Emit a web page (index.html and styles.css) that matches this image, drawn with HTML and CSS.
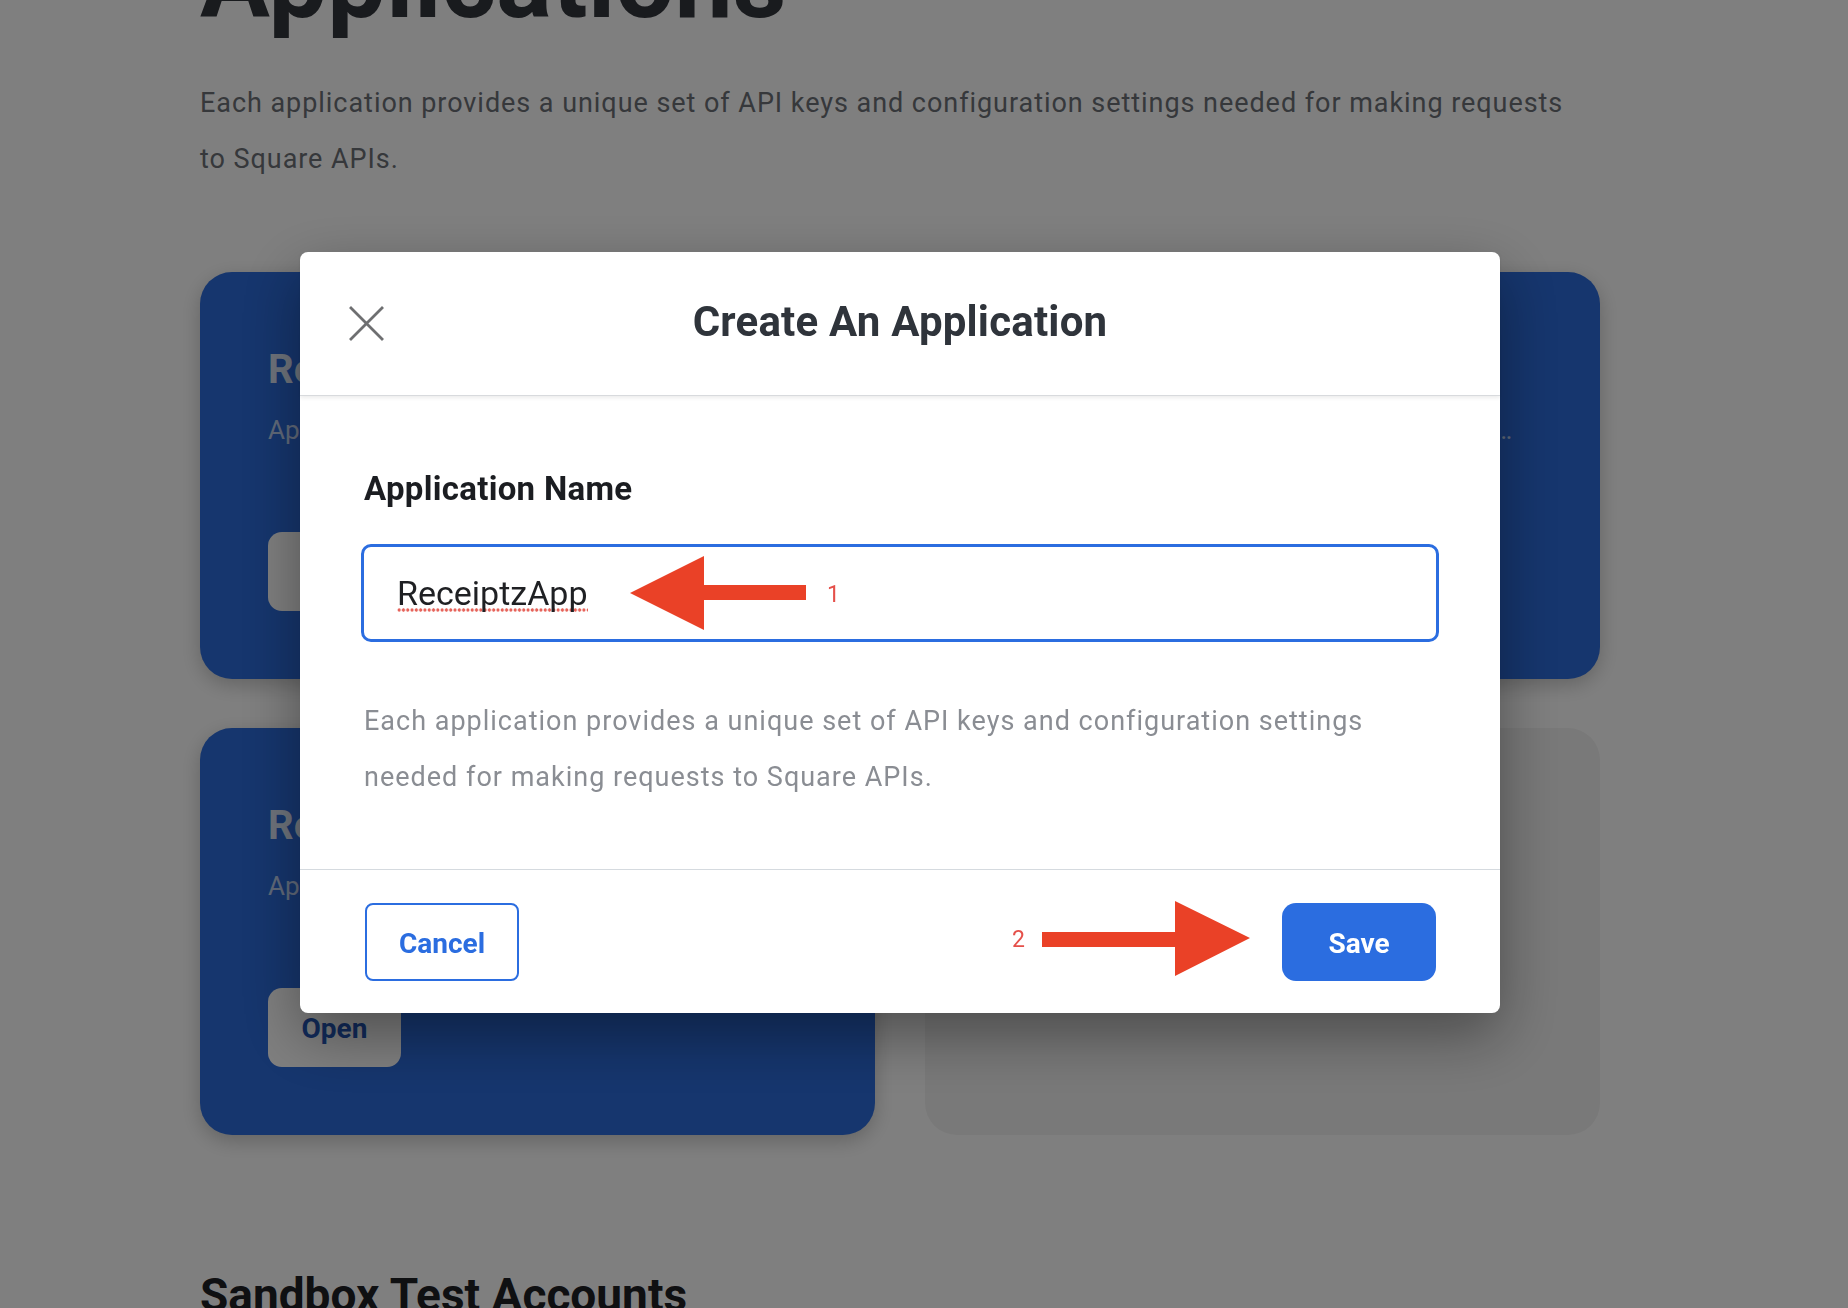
FILE: index.html
```html
<!DOCTYPE html>
<html lang="en">
<head>
<meta charset="utf-8">
<title>Applications</title>
<link rel="stylesheet" href="styles.css">
</head>
<body>
<main class="page">
  <h1 class="page-title">Applications</h1>
  <p class="page-intro">Each application provides a unique set of API keys and configuration settings needed for making requests to Square APIs.</p>

  <section class="app-grid">
    <article class="app-card app-card--wide">
      <h2 class="app-name">ReceiptzApp</h2>
      <p class="app-meta">Application ID: sandbox-sq0idb-4Rf09dPZfXr7yKdT1mM3kA · Created for testing receipts and transactions across sandbox locations with webhooks and OAuth permissions enabled for development</p>
      <button class="app-open" type="button">Open</button>
    </article>
    <article class="app-card">
      <h2 class="app-name">Receipts Demo</h2>
      <p class="app-meta">Application ID: sandbox-sq0idb-8HkLq2</p>
      <button class="app-open" type="button">Open</button>
    </article>
    <article class="app-card app-card--empty"></article>
  </section>

  <h2 class="section-title">Sandbox Test Accounts</h2>
</main>

<div class="overlay">
  <div class="modal" role="dialog" aria-label="Create An Application">
    <header class="modal-header">
      <button class="modal-close" type="button" aria-label="Close">
        <svg width="35" height="35" viewBox="0 0 35 35"><path d="M2 2 L33 33 M33 2 L2 33" stroke="#6e6f71" stroke-width="2.8" stroke-linecap="square" fill="none"/></svg>
      </button>
      <h3 class="modal-title">Create An Application</h3>
      <span class="modal-spacer"></span>
    </header>
    <div class="modal-body">
      <label class="field-label" for="appname">Application Name</label>
      <div class="field-input" id="appname"><span class="spell">ReceiptzApp</span></div>
      <p class="modal-desc">Each application provides a unique set of API keys and configuration settings needed for making requests to Square APIs.</p>
    </div>
    <footer class="modal-footer">
      <button class="btn btn-cancel" type="button">Cancel</button>
      <button class="btn btn-save" type="button">Save</button>
    </footer>
  </div>

  <svg class="annotations" width="1848" height="1308" viewBox="0 0 1848 1308">
    <polygon points="630,593 704,556 704,585 806,585 806,600 704,600 704,630" fill="#ea4127"/>
    <text x="827" y="602" class="anno-num">1</text>
    <polygon points="1042,932 1175,932 1175,901 1250,938 1175,976 1175,947 1042,947" fill="#ea4127"/>
    <text x="1012" y="947" class="anno-num">2</text>
  </svg>
</div>
</body>
</html>
```

FILE: styles.css
```css
* { box-sizing: border-box; }

html, body {
  margin: 0;
  padding: 0;
  background: #ffffff;
  font-family: Roboto, "Liberation Sans", Arial, sans-serif;
  overflow: hidden;
  height: 1308px;
}

.page {
  width: 1400px;
  margin-left: 200px;
}

.page-title {
  margin: -68px 0 0;
  font-size: 104px;
  line-height: 100px;
  font-weight: 700;
  color: #33363c;
  letter-spacing: 0.3px;
}

.page-intro {
  margin: 44px 0 0;
  max-width: 1385px;
  font-size: 27px;
  line-height: 55.5px;
  letter-spacing: 0.95px;
  color: #6c7077;
}

.app-grid {
  margin-top: 85px;
  display: grid;
  grid-template-columns: 1fr 1fr;
  column-gap: 50px;
  row-gap: 49px;
}

.app-card {
  height: 407px;
  border-radius: 32px;
  background: #2c6cdc;
  padding: 74px 68px 68px;
  box-shadow: 0 6px 20px rgba(0, 0, 0, 0.22);
  display: flex;
  flex-direction: column;
  align-items: flex-start;
  min-width: 0;
}

.app-card--wide { grid-column: 1 / span 2; }

.app-card--empty {
  background: #f3f3f3;
  box-shadow: none;
}

.app-name {
  margin: 0;
  font-size: 40px;
  line-height: 48px;
  font-weight: 700;
  color: rgba(255, 255, 255, 0.85);
}

.app-meta {
  margin: 19px 0 0;
  font-size: 26px;
  line-height: 34px;
  color: rgba(255, 255, 255, 0.72);
  white-space: nowrap;
  overflow: hidden;
  text-overflow: ellipsis;
  width: calc(100% - 18px);
}

.app-open {
  margin-top: auto;
  height: 79px;
  width: 133px;
  border: none;
  border-radius: 14px;
  background: #ffffff;
  color: #2457b8;
  font-family: inherit;
  font-size: 28px;
  font-weight: 700;
  padding-top: 3px;
}

.section-title {
  margin: 132px 0 0;
  font-size: 46px;
  line-height: 56px;
  font-weight: 700;
  color: #1f2125;
}

/* overlay & modal */
.overlay {
  position: fixed;
  inset: 0;
  background: rgba(0, 0, 0, 0.5);
}

.modal {
  position: absolute;
  left: 300px;
  top: 252px;
  width: 1200px;
  background: #ffffff;
  border-radius: 8px;
  box-shadow: 0 22px 60px rgba(0, 0, 0, 0.38);
  display: flex;
  flex-direction: column;
}

.modal-header {
  height: 144px;
  display: flex;
  align-items: center;
  padding: 0 49px;
  border-bottom: 1px solid #d8dadd;
  box-shadow: 0 2px 4px rgba(0, 0, 0, 0.08);
  position: relative;
}

.modal-close {
  width: 35px;
  height: 35px;
  padding: 0;
  border: none;
  background: none;
  display: flex;
}

.modal-title {
  flex: 1;
  margin: -4px 0 0;
  text-align: center;
  font-size: 42px;
  letter-spacing: 0.2px;
  font-weight: 700;
  color: #2f343b;
}

.modal-spacer { width: 35px; }

.modal-body {
  padding: 72px 61px 64px;
  display: flex;
  flex-direction: column;
}

.field-label {
  padding-left: 3px;
  font-size: 33px;
  line-height: 42px;
  letter-spacing: 0.3px;
  font-weight: 700;
  color: #1b1d21;
}

.field-input {
  margin-top: 34px;
  height: 98px;
  border: 3px solid #2b6de0;
  border-radius: 10px;
  padding: 0 33px;
  display: flex;
  align-items: center;
  font-size: 34px;
  color: #1f2023;
}

.spell {
  background-image: radial-gradient(circle at 50% 50%, #e6645b 1.4px, rgba(230, 100, 91, 0) 1.9px);
  background-size: 4.3px 4px;
  background-repeat: repeat-x;
  background-position: 0 calc(100% - 1px);
}

.modal-desc {
  margin: 52px 0 0;
  padding-left: 3px;
  font-size: 27px;
  line-height: 55.5px;
  letter-spacing: 1px;
  color: #8a8d93;
}

.modal-footer {
  border-top: 1px solid #d5dadf;
  padding: 33px 64px 32px 65px;
  display: flex;
  justify-content: space-between;
  align-items: center;
}

.btn {
  width: 154px;
  height: 78px;
  font-family: inherit;
  font-size: 28px;
  font-weight: 700;
  cursor: pointer;
  padding-top: 4px;
}

.btn-cancel {
  background: #ffffff;
  border: 2px solid #2b6de0;
  border-radius: 8px;
  color: #2b6de0;
}

.btn-save {
  background: #2b6de0;
  border: none;
  border-radius: 14px;
  color: #ffffff;
}

.annotations {
  position: absolute;
  left: 0;
  top: 0;
  pointer-events: none;
}

.anno-num {
  font-family: Roboto, "Liberation Sans", sans-serif;
  font-size: 23px;
  fill: #e5504a;
}
```
